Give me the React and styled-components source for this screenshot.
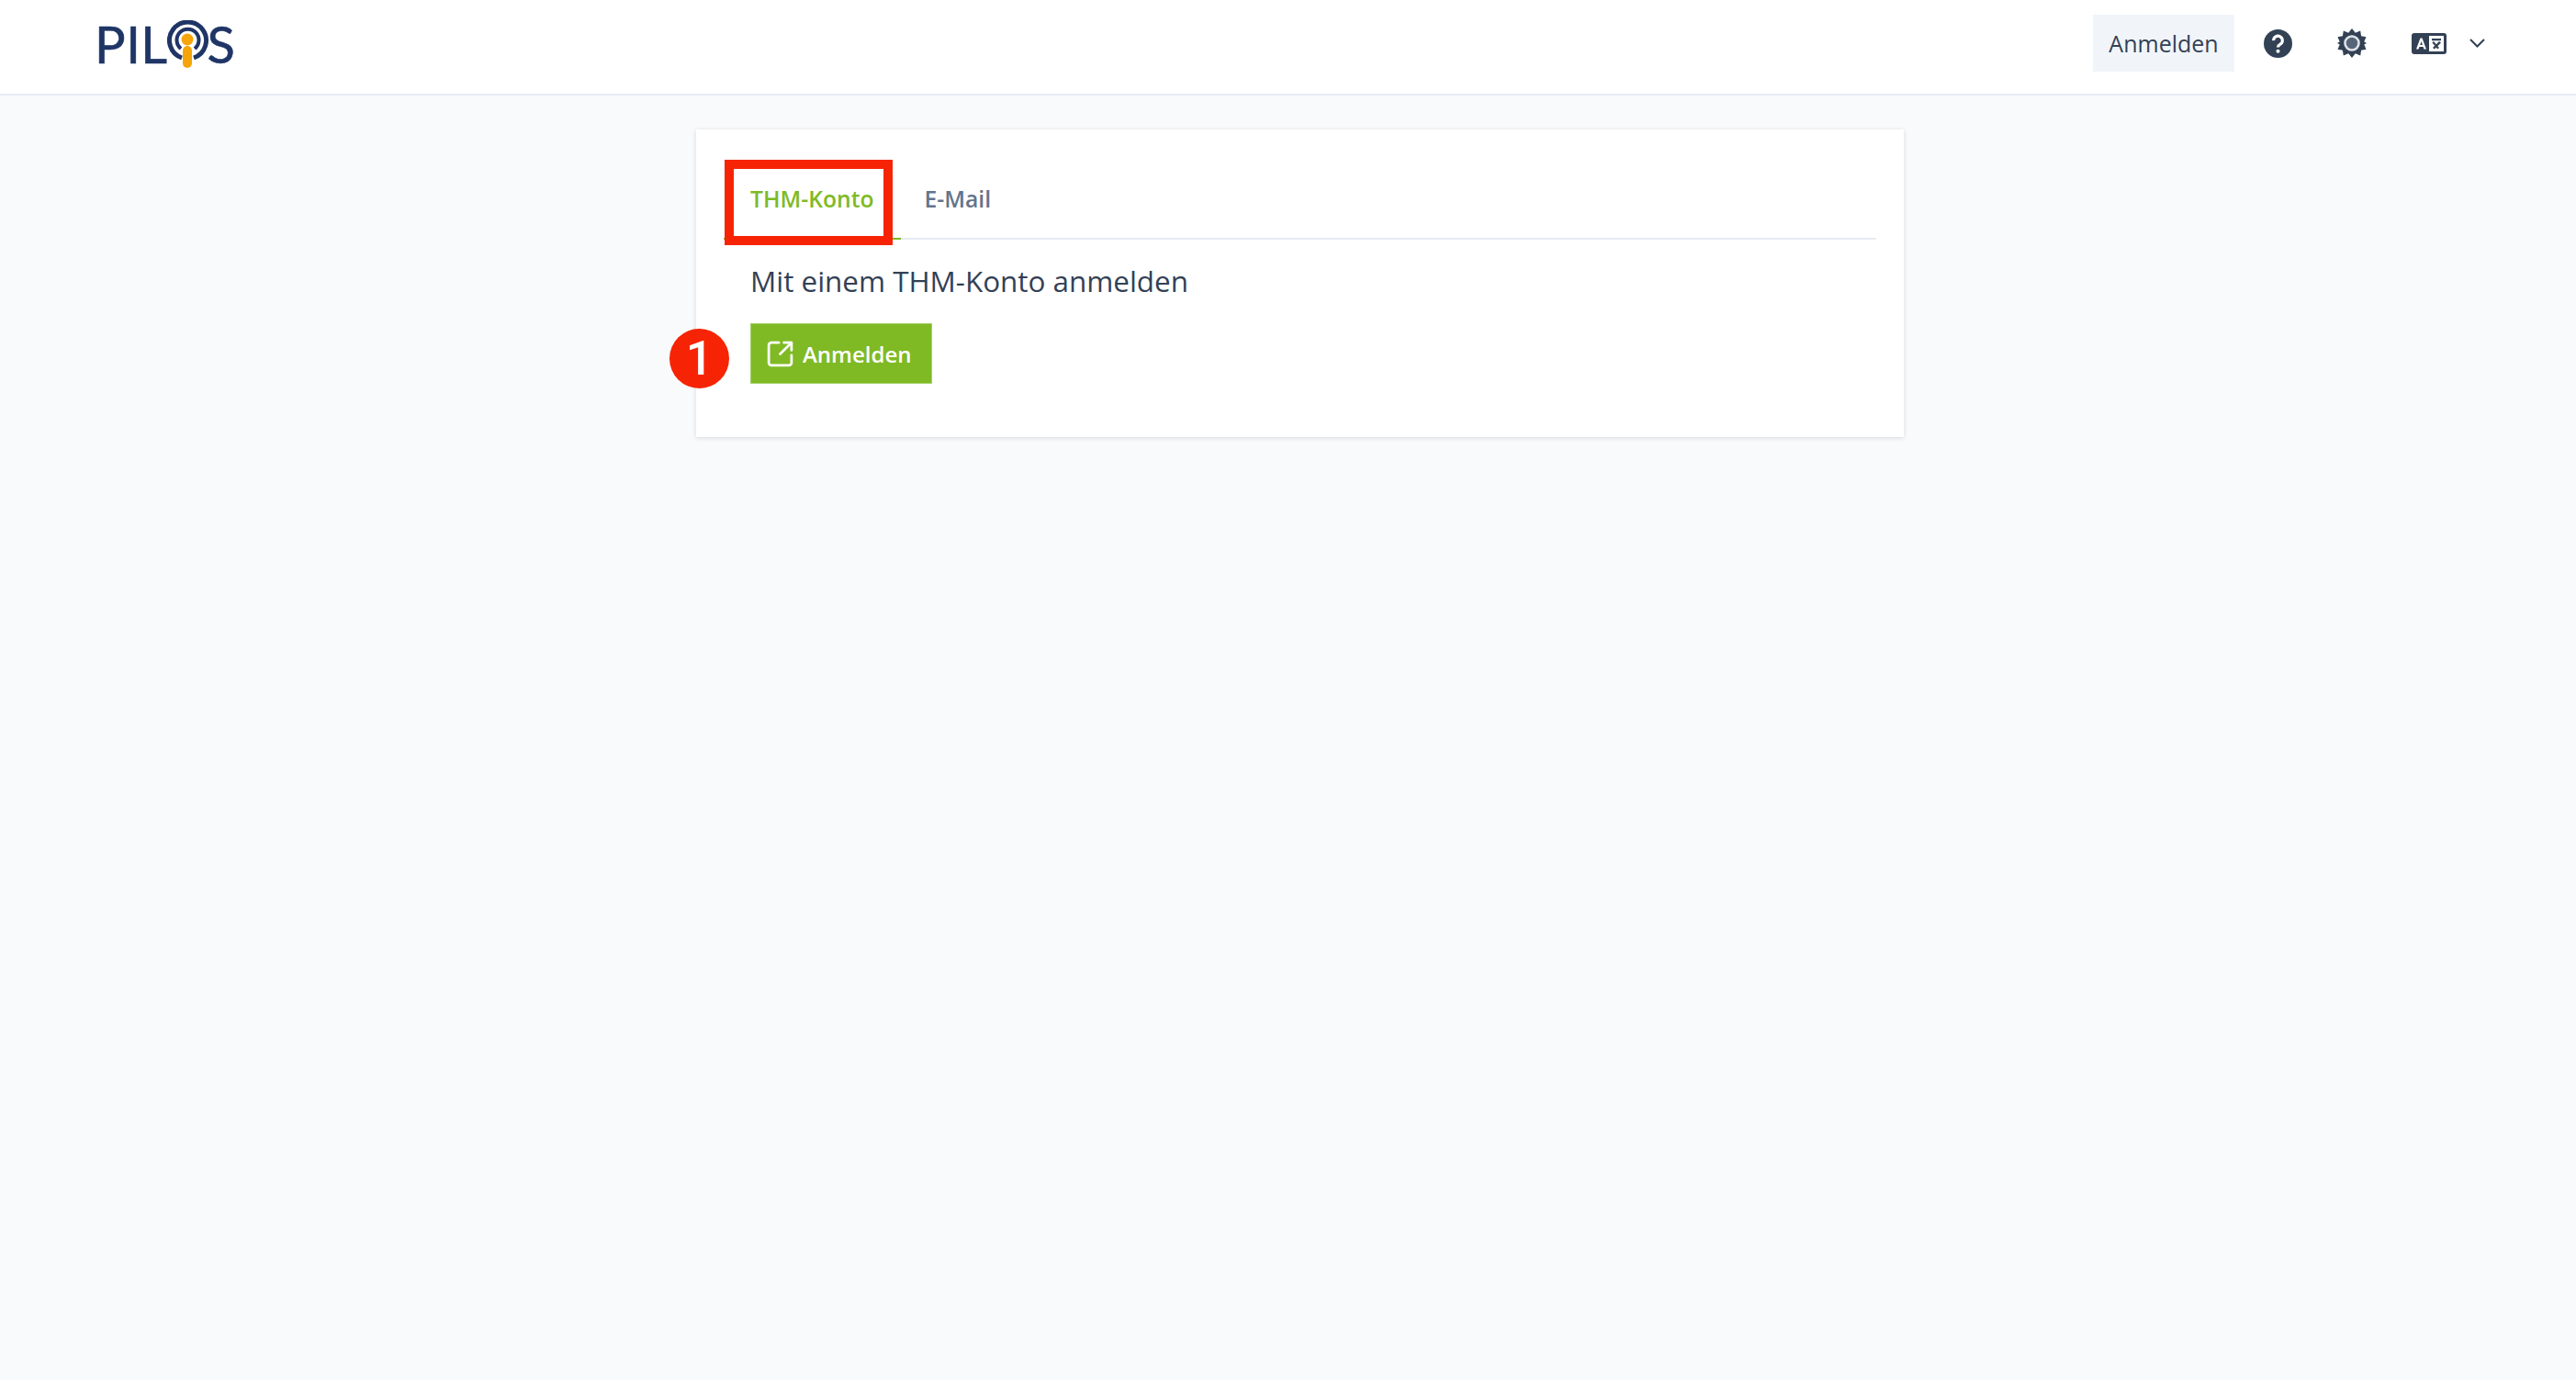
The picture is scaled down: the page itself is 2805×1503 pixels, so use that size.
import styled, { createGlobalStyle } from "styled-components";
import { SquareArrowOutUpRight } from "lucide-react";

const GlobalStyle = createGlobalStyle`
  html, body {
    margin: 0;
    padding: 0;
    background: #f9fafb;
    font-family: "Open Sans", sans-serif;
  }
`;

const Page = styled.div`
  min-height: 1503px;
  display: flex;
  flex-direction: column;
`;

const TopBar = styled.header`
  height: 102px;
  box-sizing: content-box;
  background: #fff;
  border-bottom: 2px solid #e6ebf2;
  display: flex;
  align-items: center;
  justify-content: space-between;
  padding: 0 99px 0 103px;
`;

const Logo = styled.div`
  display: flex;
  align-items: center;
  color: #1f3566;
  font-family: "Lato", sans-serif;
  font-size: 56px;
  line-height: 1;
  letter-spacing: 0.5px;
  -webkit-text-stroke: 0.6px #1f3566;
  margin-top: -6px;

  svg {
    margin: 0 -2px 0 -1px;
  }
`;

const Nav = styled.nav`
  display: flex;
  align-items: center;
  color: #334155;
  padding-bottom: 8px;
`;

const NavButton = styled.button`
  height: 62px;
  width: 154px;
  margin-right: 32px;
  border: 0;
  background: #f1f5f9;
  color: #334155;
  font-family: inherit;
  font-size: 25px;
  padding: 0;
`;

const NavIcon = styled.span`
  display: flex;
  width: ${(p) => p.$width}px;
  margin-right: ${(p) => p.$gap}px;
`;

const Main = styled.main`
  display: flex;
  justify-content: center;
  padding: 37px 0 0 26px;
`;

const Card = styled.section`
  position: relative;
  width: 1315px;
  height: 335px;
  box-sizing: border-box;
  background: #fff;
  box-shadow: 0 1px 5px rgba(15, 23, 42, 0.14);
  padding: 32px 30px 0;
`;

const TabList = styled.div`
  display: flex;
  height: 86px;
  border-bottom: 2px solid #e6ebf2;
`;

const Tab = styled.div`
  height: 86px;
  padding: 0 29px 0 ${(p) => (p.$active ? 29 : 26)}px;
  display: flex;
  align-items: center;
  font-size: 24.7px;
  font-weight: 600;
  color: ${(p) => (p.$active ? "#7fba24" : "#64748b")};
  border-bottom: 2px solid ${(p) => (p.$active ? "#7fba24" : "transparent")};
`;

const Title = styled.h2`
  margin: 24px 0 0 29px;
  font-size: 31.4px;
  line-height: 41px;
  font-weight: 500;
  color: #334155;
`;

const LoginButton = styled.button`
  margin: 26px 0 0 29px;
  width: 198px;
  height: 66px;
  border: 1px solid #a5d06a;
  background: #7fba24;
  color: #fff;
  display: flex;
  align-items: center;
  gap: 8px;
  padding: 0 0 0 15px;
  font-family: inherit;
  font-size: 24px;
  font-weight: 600;
`;

/* tutorial markers drawn over the screenshot */
const HighlightBox = styled.div`
  position: absolute;
  left: 31px;
  top: 33px;
  width: 183px;
  height: 93px;
  box-sizing: border-box;
  border: 10px solid #f62405;
`;

const StepBadge = styled.div`
  position: absolute;
  left: -29px;
  top: 217px;
  width: 65px;
  height: 65px;
  border-radius: 50%;
  background: #f62405;
  color: #fff;
  display: flex;
  align-items: center;
  justify-content: center;
  font-family: "Roboto", sans-serif;
  font-size: 52px;
  font-weight: 500;
`;

const LogoMark = () => (
  <svg width="46" height="52" viewBox="0 0 46 52" fill="none">
    <path d="M16 41A20 20 0 1 1 29 41" stroke="#1f3566" strokeWidth="5" />
    <path d="M15 31A12 12 0 1 1 30 31" stroke="#1f3566" strokeWidth="4" />
    <circle cx="22" cy="21" r="6.5" fill="#f5a50a" />
    <rect x="17" y="28" width="10" height="24" rx="5" fill="#f5a50a" />
  </svg>
);

const HelpIcon = () => (
  <svg width="31" height="31" viewBox="0 0 32 32">
    <circle cx="16" cy="16" r="16" fill="#334155" />
    <path d="M11 12.5a5 5 0 1 1 7.6 4.2c-1.7 1-2.6 1.8-2.6 3.3" fill="none" stroke="#fff" strokeWidth="3.2" />
    <circle cx="16" cy="24.6" r="2.1" fill="#fff" />
  </svg>
);

const SunIcon = () => (
  <svg width="32" height="32" viewBox="0 0 32 32">
    <path
      fill="#334155"
      d="M16 0l3.8 4.8 5.4-2.2.9 5.6 5.4 1-2.2 5.2L32 16l-2.7 1.6 2.2 5.2-5.4 1-.9 5.6-5.4-2.2L16 32l-3.8-4.8-5.4 2.2-.9-5.6-5.4-1 2.2-5.2L0 16l2.7-1.6L.5 9.2l5.4-1 .9-5.6 5.4 2.2z"
    />
    <circle cx="16" cy="16" r="7.5" fill="#566579" stroke="#dfe3e8" strokeWidth="2.6" />
  </svg>
);

const LanguageIcon = () => (
  <svg width="38" height="23" viewBox="0 0 38 23">
    <rect width="38" height="23" rx="3" fill="#334155" />
    <rect x="19" y="3" width="16" height="17" fill="#fff" />
    <path d="M5 17.5l4.5-12h2l4.5 12h-2.6l-.8-2.5H8.4l-.8 2.5zM9.2 12.9h2.7l-1.3-4z" fill="#fff" />
    <path d="M22 6h10v2.2h-10zM23 16l7-7 2 1.4-7 7zM24 9l6 7-1.6 1.4-6-7z" fill="#334155" />
  </svg>
);

const ChevronIcon = () => (
  <svg width="17" height="10" viewBox="0 0 17 10" fill="none">
    <path d="M1 1l7.5 7.5L16 1" stroke="#334155" strokeWidth="2" />
  </svg>
);

export default function App() {
  return (
    <Page>
      <GlobalStyle />
      <TopBar>
        <Logo>
          PIL
          <LogoMark />
          S
        </Logo>
        <Nav>
          <NavButton>Anmelden</NavButton>
          <NavIcon $width={31} $gap={49}><HelpIcon /></NavIcon>
          <NavIcon $width={32} $gap={49}><SunIcon /></NavIcon>
          <NavIcon $width={38} $gap={25}><LanguageIcon /></NavIcon>
          <NavIcon $width={17} $gap={0}><ChevronIcon /></NavIcon>
        </Nav>
      </TopBar>
      <Main>
        <Card>
          <TabList>
            <Tab $active>THM-Konto</Tab>
            <Tab>E-Mail</Tab>
          </TabList>
          <Title>Mit einem THM-Konto anmelden</Title>
          <LoginButton>
            <SquareArrowOutUpRight size={33} strokeWidth={2} />
            Anmelden
          </LoginButton>
          <HighlightBox />
          <StepBadge>1</StepBadge>
        </Card>
      </Main>
    </Page>
  );
}
